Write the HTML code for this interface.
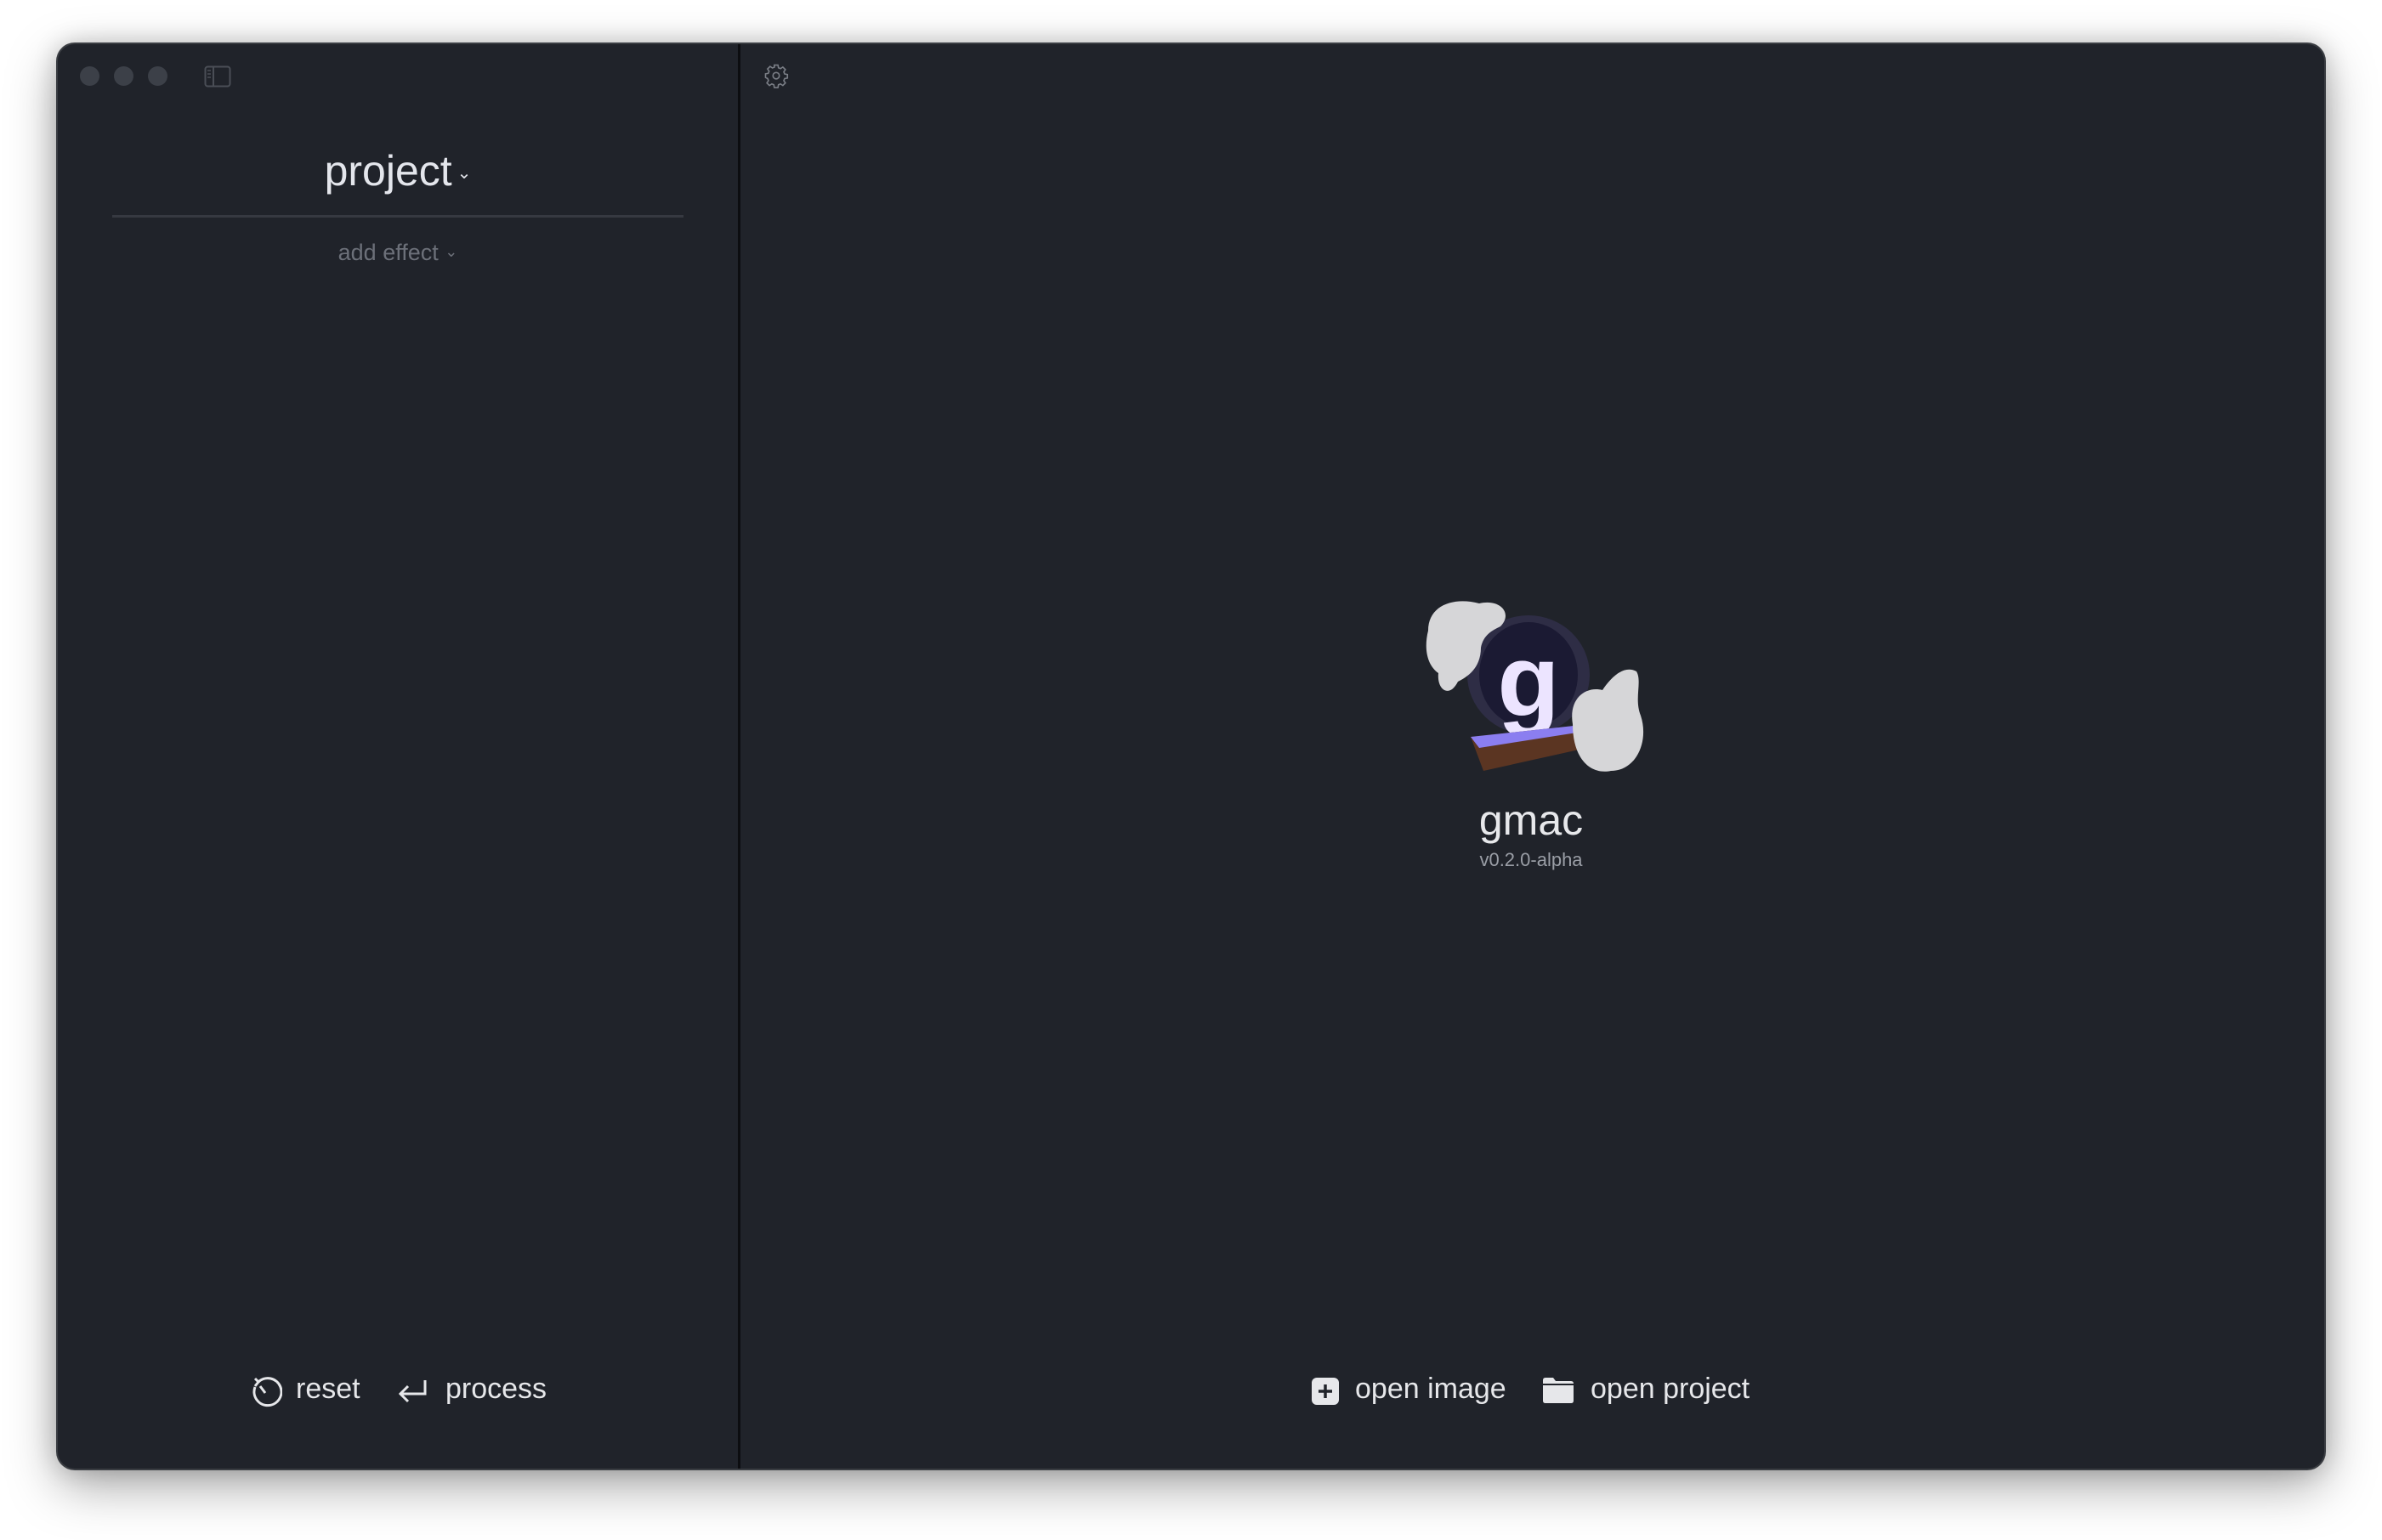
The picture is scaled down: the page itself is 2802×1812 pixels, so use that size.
<!DOCTYPE html>
<html><head><meta charset="utf-8"><style>
html,body{margin:0;padding:0;width:2802px;height:1812px;background:#fff;overflow:hidden;font-family:"Liberation Sans",sans-serif}
.win{position:absolute;left:68px;top:52px;width:2666px;height:1676px;background:#20232a;border-radius:20px;box-shadow:0 0 0 2px #3a3d42,0 20px 60px rgba(0,0,0,.35),0 0 30px rgba(0,0,0,.2);overflow:hidden}
.side{position:absolute;left:0;top:0;width:800px;height:100%;border-right:3px solid #0c0d10}
.dot{position:absolute;top:26px;width:23px;height:23px;border-radius:50%;background:#3c4048}
.t{position:absolute;white-space:nowrap;color:#e6e7ea}
</style></head><body>
<div class="win">
<div class="side">
<div class="dot" style="left:26px"></div><div class="dot" style="left:66px"></div><div class="dot" style="left:106px"></div>
<svg style="position:absolute;left:172px;top:25px" width="32" height="26" viewBox="0 0 32 26"><rect x="1.5" y="1.5" width="29" height="23" rx="3" fill="none" stroke="#4a4e56" stroke-width="2"/><line x1="11" y1="2" x2="11" y2="24" stroke="#4a4e56" stroke-width="2"/><line x1="4" y1="6" x2="8" y2="6" stroke="#4a4e56" stroke-width="1.5"/><line x1="4" y1="10" x2="8" y2="10" stroke="#4a4e56" stroke-width="1.5"/><line x1="4" y1="14" x2="8" y2="14" stroke="#4a4e56" stroke-width="1.5"/></svg>
<div class="t" style="left:0;width:800px;text-align:center;top:120px;font-size:50px;color:#e4e6ec">project<span style="font-size:20px;position:relative;top:-8px;margin-left:6px">&#8964;</span></div>
<div style="position:absolute;left:64px;top:201px;width:672px;height:3px;background:#363941"></div>
<div class="t" style="left:0;width:800px;text-align:center;top:230px;font-size:27px;color:#6c7079">add effect <span style="font-size:18px;position:relative;top:-4px">&#8964;</span></div>
<svg style="position:absolute;left:226px;top:1566px" width="38" height="40" viewBox="0 0 38 40"><path d="M10 8 A16 16 0 1 1 6 14" fill="none" stroke="#e6e7ea" stroke-width="3"/><path d="M6 4 L10 8 L6 13" fill="none" stroke="#e6e7ea" stroke-width="3"/><line x1="12" y1="13" x2="18" y2="21" stroke="#e6e7ea" stroke-width="3"/></svg>
<div class="t" style="left:280px;top:1563px;font-size:34px">reset</div>
<svg style="position:absolute;left:398px;top:1568px" width="38" height="34" viewBox="0 0 38 34"><path d="M34 4 V20 H6 M14 11 L5 20 L14 29" fill="none" stroke="#e6e7ea" stroke-width="3"/></svg>
<div class="t" style="left:456px;top:1563px;font-size:34px">process</div>
</div>
<svg style="position:absolute;left:830px;top:22px" width="30" height="30" viewBox="0 0 24 24"><path d="M10.3 2h3.4l.5 2.6 1.9.8 2.2-1.5 2.4 2.4-1.5 2.2.8 1.9 2.6.5v3.4l-2.6.5-.8 1.9 1.5 2.2-2.4 2.4-2.2-1.5-1.9.8-.5 2.6h-3.4l-.5-2.6-1.9-.8-2.2 1.5-2.4-2.4 1.5-2.2-.8-1.9L2 13.7v-3.4l2.6-.5.8-1.9-1.5-2.2 2.4-2.4 2.2 1.5 1.9-.8z" fill="none" stroke="#7a7e86" stroke-width="1.3"/><circle cx="12" cy="12" r="3" fill="none" stroke="#7a7e86" stroke-width="1.3"/></svg>
<svg style="position:absolute;left:1602px;top:650px" width="270" height="220" viewBox="0 0 270 220">
<ellipse cx="128" cy="92" rx="72" ry="70" fill="#2e2d45"/>
<ellipse cx="128" cy="92" rx="58" ry="62" fill="#1b1a33"/>
<text x="128" y="140" text-anchor="middle" font-size="120" font-weight="bold" fill="#ece4ff" font-family="Liberation Sans">g</text>
<polygon points="60,165 200,150 210,175 75,205" fill="#5b3522"/>
<polygon points="60,165 200,150 185,160 70,178" fill="#8b7ef0"/>
<path d="M10 40 C10 10 40 0 70 8 C95 2 110 20 95 35 C85 40 75 45 72 60 C72 85 55 95 45 100 C35 120 20 110 22 90 C8 80 5 60 10 40Z" fill="#d6d6d8"/>
<path d="M180 150 C175 120 195 105 215 110 C225 95 240 80 255 88 C262 100 252 120 260 140 C270 170 255 205 225 205 C200 210 180 190 180 150Z" fill="#d6d6d8"/>
</svg>
<div class="t" style="left:1433px;width:600px;text-align:center;top:884px;font-size:50px;color:#e7e8eb">gmac</div>
<div class="t" style="left:1433px;width:600px;text-align:center;top:947px;font-size:22px;color:#9a9ea6">v0.2.0-alpha</div>
<svg style="position:absolute;left:1474px;top:1568px" width="34" height="34" viewBox="0 0 34 34"><rect x="1" y="1" width="32" height="32" rx="6" fill="#e6e7ea"/><path d="M17 9V25M9 17H25" stroke="#20232a" stroke-width="3.5"/></svg>
<div class="t" style="left:1526px;top:1563px;font-size:34px">open image</div>
<svg style="position:absolute;left:1746px;top:1568px" width="38" height="32" viewBox="0 0 38 32"><path d="M1 4 Q1 1 4 1 H13 L16 5 H34 Q37 5 37 8 V28 Q37 31 34 31 H4 Q1 31 1 28Z" fill="#e6e7ea"/><rect x="1" y="8" width="36" height="2" fill="#20232a"/></svg>
<div class="t" style="left:1803px;top:1563px;font-size:34px">open project</div>
</div>
</body></html>
